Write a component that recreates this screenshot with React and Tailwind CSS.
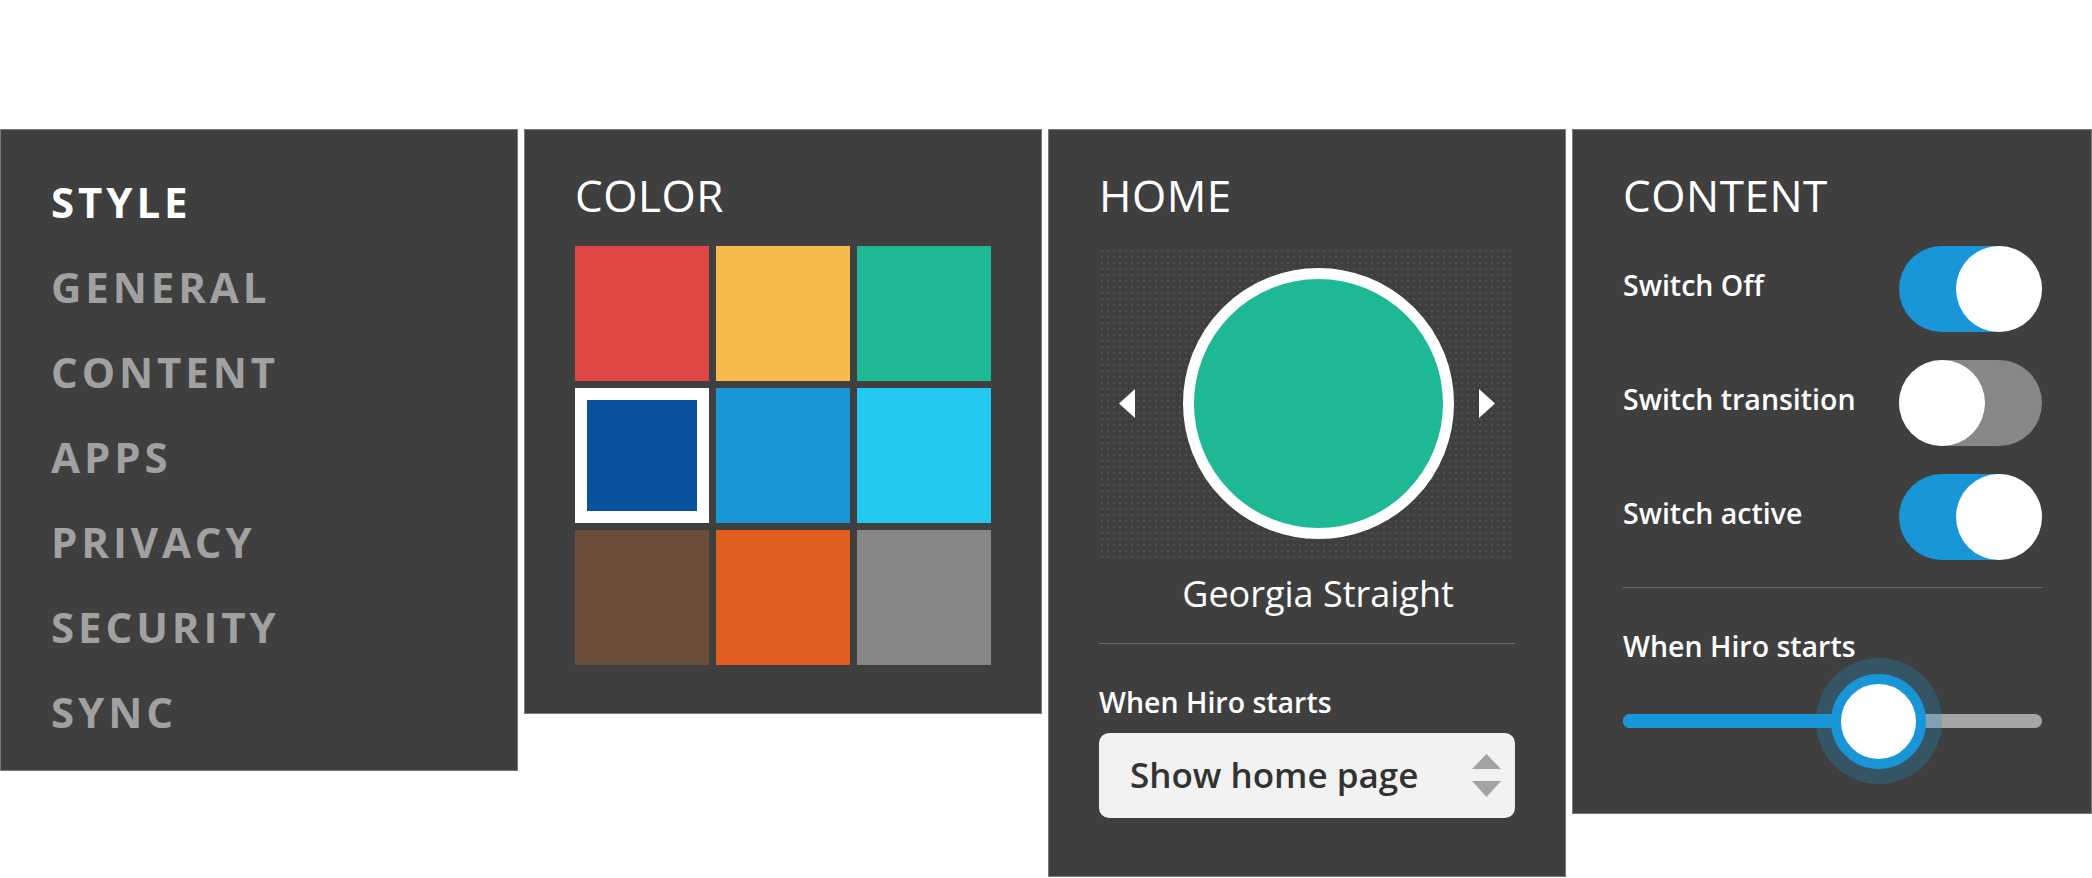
import { useState } from "react";

const NAV = ["STYLE", "GENERAL", "CONTENT", "APPS", "PRIVACY", "SECURITY", "SYNC"];

const SWATCHES = [
  "bg-[#e04744]",
  "bg-[#f6bb4c]",
  "bg-[#1eb994]",
  "bg-[#09539e]",
  "bg-[#1996d8]",
  "bg-[#22c8ee]",
  "bg-[#6b4e39]",
  "bg-[#e2601f]",
  "bg-[#868686]",
];

function Heading({ children }) {
  return (
    <h2 className="text-[44px] leading-[44px] font-normal tracking-[0.012em] text-white">{children}</h2>
  );
}

function Switch({ on, muted }) {
  return (
    <div
      className={`w-[143px] h-[86px] rounded-full flex ${on ? "justify-end" : "justify-start"} ${
        muted ? "bg-[#878787]" : "bg-[#1996d8]"
      }`}
    >
      <div className="w-[86px] h-[86px] rounded-full bg-white" />
    </div>
  );
}

export default function App() {
  const [active] = useState(3);

  return (
    <div className="w-[2092px] h-[878px] bg-white font-['Open_Sans',sans-serif] overflow-hidden">
      <div className="flex items-start gap-[6px] pt-[129px]">
        {/* Nav */}
        <nav className="w-[518px] bg-[#3f3f3f] border border-[#7a7a7a] pt-[29px] pb-[16px] px-[50px]">
          {NAV.map((item, i) => (
            <div
              key={item}
              className={`text-[42px] leading-[85px] font-bold tracking-[0.093em] ${
                i === 0 ? "text-white" : "text-[#a1a1a1]"
              }`}
            >
              {item}
            </div>
          ))}
        </nav>

        {/* Color */}
        <section className="w-[518px] bg-[#3f3f3f] border border-[#7a7a7a] pt-[43px] pb-[48px] px-[50px]">
          <Heading>COLOR</Heading>
          <div className="grid grid-cols-3 gap-[7px] mt-[29px]">
            {SWATCHES.map((c, i) => (
              <div
                key={c}
                className={`h-[135px] ${c} ${i === active ? "border-[12px] border-white" : ""}`}
              />
            ))}
          </div>
        </section>

        {/* Home */}
        <section className="w-[518px] bg-[#3f3f3f] border border-[#7a7a7a] pt-[43px] pb-[58px] px-[50px]">
          <Heading>HOME</Heading>
          <div className="mt-[31px] h-[311px] flex items-center pl-[20px] pr-[20px] bg-[radial-gradient(circle,#4f4f4f_1.2px,transparent_1.4px)] bg-[length:6px_6px]">
            <svg width="16" height="29" viewBox="0 0 16 29">
              <path d="M16 0 L0 14.5 L16 29 Z" fill="#fff" />
            </svg>
            <div className="ml-[48px] w-[271px] h-[271px] rounded-full border-[11px] border-white bg-[#1eb994]" />
            <div className="flex-1" />
            <svg width="16" height="29" viewBox="0 0 16 29">
              <path d="M0 0 L16 14.5 L0 29 Z" fill="#fff" />
            </svg>
          </div>
          <p className="mt-[13px] pl-[22px] text-center text-[36px] leading-[44px] text-white">
            Georgia Straight
          </p>
          <div className="mt-[27px] h-px bg-[#6a6a6a]" />
          <p className="mt-[38px] text-[28.5px] leading-[40px] font-semibold text-white">When Hiro starts</p>
          <div className="mt-[11px] h-[85px] rounded-[10px] bg-[#f2f2f2] flex items-center pl-[31px] pr-[14px]">
            <span className="flex-1 text-[35px] font-semibold text-[#333333]">Show home page</span>
            <svg width="29" height="43" viewBox="0 0 29 43">
              <path d="M0 15 L14.5 0 L29 15 Z" fill="#a3a3a3" />
              <path d="M0 27 L29 27 L14.5 43 Z" fill="#a3a3a3" />
            </svg>
          </div>
        </section>

        {/* Content */}
        <section className="flex-1 bg-[#3f3f3f] border border-[#7a7a7a] pt-[43px] pb-[85px] pl-[50px] pr-[49px]">
          <Heading>CONTENT</Heading>
          <div className="mt-[29px] flex flex-col gap-[28px]">
            {[
              ["Switch Off", true, false],
              ["Switch transition", false, true],
              ["Switch active", true, false],
            ].map(([label, on, muted]) => (
              <div key={label} className="flex items-center justify-between">
                <span className="pb-[8px] text-[28.5px] font-semibold text-white">{label}</span>
                <Switch on={on} muted={muted} />
              </div>
            ))}
          </div>
          <div className="mt-[27px] h-px bg-[#6a6a6a]" />
          <p className="mt-[38px] text-[28.5px] leading-[40px] font-semibold text-white">When Hiro starts</p>
          <div className="relative mt-[48px] h-[14px] rounded-full bg-[#a5a5a5]">
            <div className="absolute left-0 top-0 h-[14px] w-[61%] rounded-full bg-[#1996d8]" />
            <div className="absolute left-[61%] top-1/2 -translate-x-1/2 -translate-y-1/2 w-[126px] h-[126px] rounded-full bg-[#1996d8]/25 flex items-center justify-center">
              <div className="w-[95px] h-[95px] rounded-full bg-white border-[10px] border-[#1996d8]" />
            </div>
          </div>
        </section>
      </div>
    </div>
  );
}
